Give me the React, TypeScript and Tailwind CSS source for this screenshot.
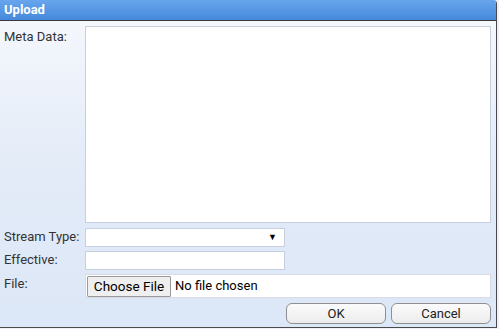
import React from "react";

export default function App() {
  const font = { fontFamily: "Roboto, 'Liberation Sans', Arial, sans-serif" };
  return (
    <div className="w-[499px] h-[329px] bg-[#eef2f8]" style={font}>
      <div className="w-[497px] h-[328px] flex flex-col border-r border-b border-[#4a4a4a] rounded-tr-[4px] overflow-hidden">
        <div className="h-[21px] shrink-0 bg-gradient-to-b from-[#67a6ec] to-[#4689dd] text-white font-bold text-[13px] leading-[20px] pl-[4px] border-b border-[#3a3a3a]">
          Upload
        </div>
        <div className="flex-1 bg-gradient-to-b from-[#f4f7fc] via-[#e3ebf8] to-[#dce7f7] pt-[5px] pl-[4px] pr-[5px] text-[13px] text-[#333]">
          <div className="grid grid-cols-[81px_1fr] gap-y-[5px]">
            <div className="pt-[3px] leading-[15px]">Meta Data:</div>
            <div className="h-[197px] bg-white border border-[#c7cfdf]" />
            <div className="leading-[18px]">Stream Type:</div>
            <div className="w-[200px] h-[19px] bg-white border border-[#c7cfdf] flex items-center justify-end pr-[7px] text-[9px] text-black">▼</div>
            <div className="leading-[18px] -mt-[1px]">Effective:</div>
            <div className="w-[200px] h-[19px] -mt-[1px] bg-white border border-[#c7cfdf]" />
            <div className="leading-[18px]">File:</div>
            <div className="h-[24px] -mt-[1px] bg-white border border-[#d6dbe6] flex items-center pl-[1px]">
              <div className="h-[21px] w-[84px] text-center bg-[#efefef] border border-[#9a9a9a] rounded-[1px] text-[13.5px] leading-[19px] text-black">Choose File</div>
              <span className="ml-[4px] text-[13px] text-black">No file chosen</span>
            </div>
          </div>
          <div className="flex justify-end gap-[5px] mt-[5px]">
            <button className="w-[100px] h-[21px] rounded-[6px] border border-[#8f8f8f] bg-gradient-to-b from-[#fbfbfb] to-[#ececec] text-[13px] text-[#222] leading-[19px]">OK</button>
            <button className="w-[100px] h-[21px] rounded-[6px] border border-[#8f8f8f] bg-gradient-to-b from-[#fbfbfb] to-[#ececec] text-[13px] text-[#222] leading-[19px]">Cancel</button>
          </div>
        </div>
      </div>
    </div>
  );
}
